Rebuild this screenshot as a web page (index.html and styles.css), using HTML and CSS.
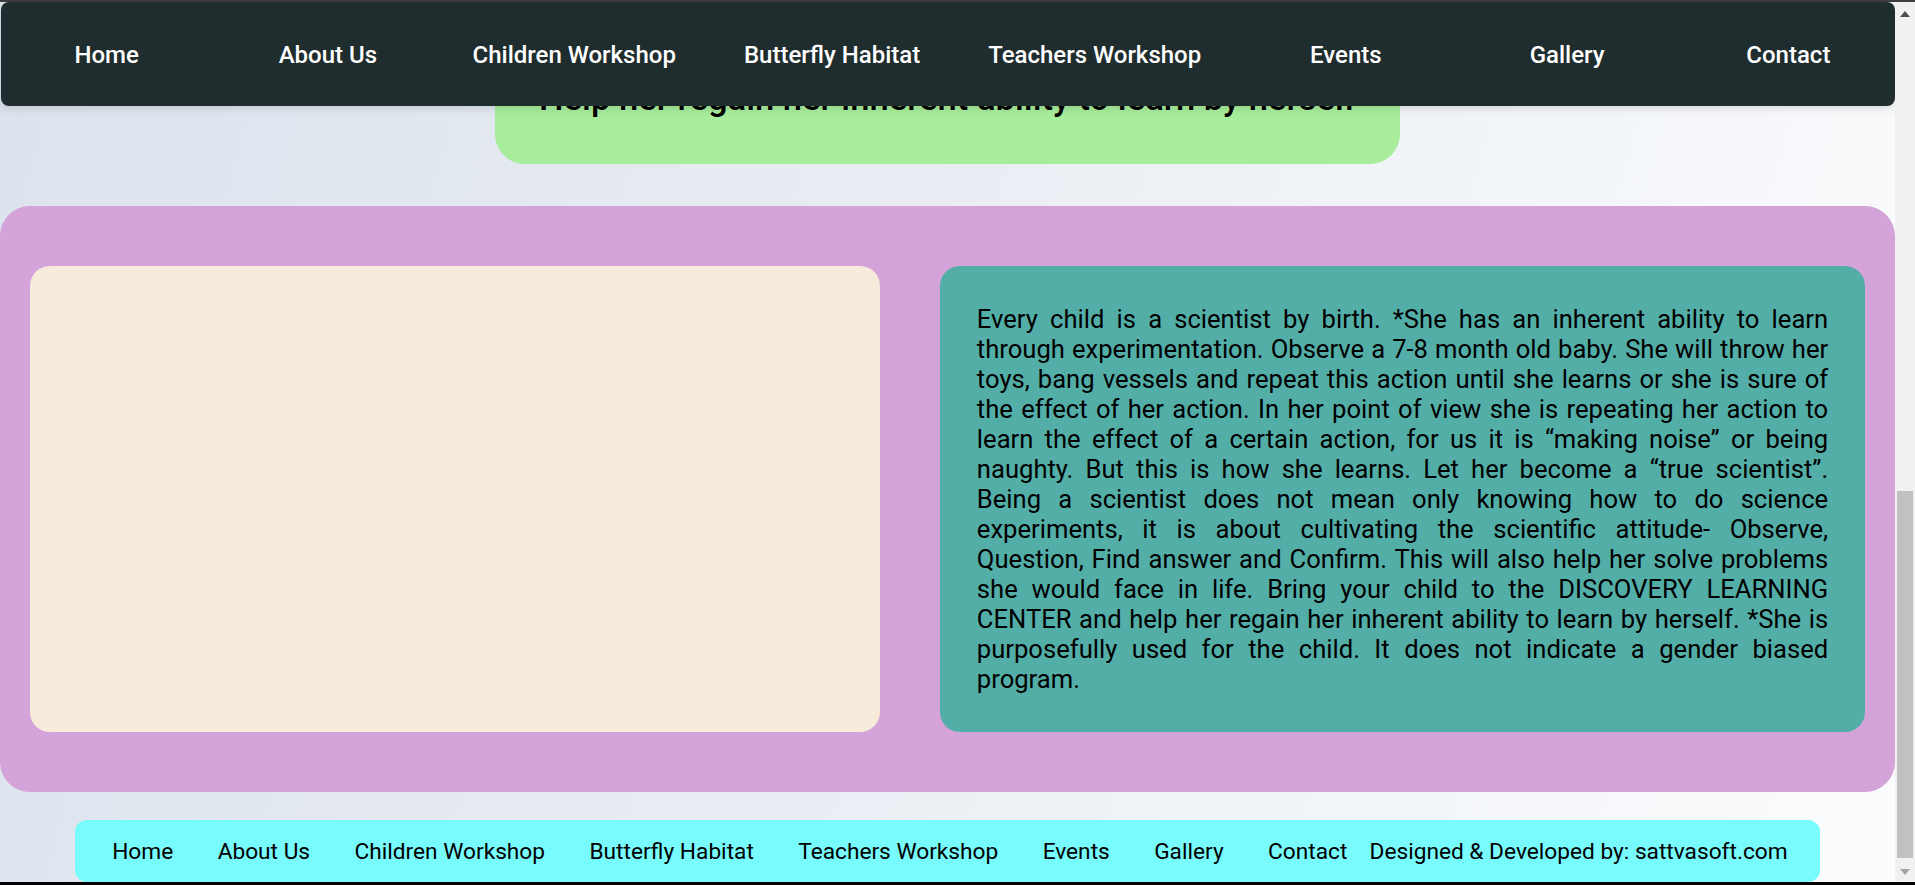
FILE: index.html
```html
<!DOCTYPE html>
<html lang="en">
<head>
<meta charset="utf-8">
<title>Discovery Learning Center</title>
<link rel="stylesheet" href="styles.css">
</head>
<body>
<div class="screen">
  <div class="chrome-top"></div>
  <div class="viewport">
    <div class="page">
      <nav class="topnav">
        <a href="#">Home</a>
        <a href="#">About Us</a>
        <a href="#">Children Workshop</a>
        <a href="#">Butterfly Habitat</a>
        <a href="#">Teachers Workshop</a>
        <a href="#">Events</a>
        <a href="#">Gallery</a>
        <a href="#">Contact</a>
      </nav>
      <main class="content">
        <div class="banner">
          <h2>Help her regain her inherent ability to learn by herself</h2>
        </div>
        <section class="about">
          <div class="media"></div>
          <div class="story">
            <p>Every child is a scientist by birth. *She has an inherent ability to learn through experimentation. Observe a 7-8 month old baby. She will throw her toys, bang vessels and repeat this action until she learns or she is sure of the effect of her action. In her point of view she is repeating her action to learn the effect of a certain action, for us it is “making noise” or being naughty. But this is how she learns. Let her become a “true scientist”. Being a scientist does not mean only knowing how to do science experiments, it is about cultivating the scientific attitude- Observe, Question, Find answer and Confirm. This will also help her solve problems she would face in life. Bring your child to the DISCOVERY LEARNING CENTER and help her regain her inherent ability to learn by herself. *She is purposefully used for the child. It does not indicate a gender biased program.</p>
          </div>
        </section>
        <footer class="footer">
          <a href="#">Home</a>
          <a href="#">About Us</a>
          <a href="#">Children Workshop</a>
          <a href="#">Butterfly Habitat</a>
          <a href="#">Teachers Workshop</a>
          <a href="#">Events</a>
          <a href="#">Gallery</a>
          <a href="#">Contact</a>
          <span class="credit">Designed &amp; Developed by: sattvasoft.com</span>
        </footer>
      </main>
    </div>
    <div class="scrollbar">
      <div class="sb-btn sb-up">
        <svg width="10" height="6" viewBox="0 0 10 6"><path d="M0 6 L5 0 L10 6 Z" fill="#505050"/></svg>
      </div>
      <div class="sb-track"><div class="sb-thumb"></div></div>
      <div class="sb-btn sb-down">
        <svg width="10" height="6" viewBox="0 0 10 6"><path d="M0 0 L10 0 L5 6 Z" fill="#a3a3a3"/></svg>
      </div>
    </div>
  </div>
  <div class="chrome-bottom"></div>
</div>
</body>
</html>
```
FILE: styles.css
```css
html, body {
  margin: 0;
  padding: 0;
}

body {
  font-family: Roboto, "Liberation Sans", sans-serif;
  color: #000;
}

.screen {
  width: 1915px;
  height: 885px;
  display: flex;
  flex-direction: column;
  overflow: hidden;
}

.chrome-top {
  height: 2px;
  background: #3d3d3d;
}

.chrome-bottom {
  height: 3px;
  background: #000;
}

.viewport {
  flex: 1;
  display: flex;
  min-height: 0;
}

.page {
  flex: 1;
  position: relative;
  overflow: hidden;
  background: linear-gradient(105deg, #dce3ed 0%, #e9edf3 45%, #fbfcfd 100%);
}

/* fixed header overlaying the scrolled content */
.topnav {
  position: absolute;
  top: 0;
  left: 1px;
  right: 0;
  height: 104px;
  background: #1f2d2f;
  border-radius: 8px;
  display: flex;
  align-items: center;
  padding-top: 1px;
  box-sizing: border-box;
  box-shadow: 0 3px 8px rgba(0, 0, 0, 0.12);
  z-index: 2;
}

.topnav a {
  flex: 1;
  padding: 0 34px;
  text-align: center;
  white-space: nowrap;
  color: #fff;
  font-size: 24px;
  font-weight: 500;
  text-decoration: none;
}

.topnav a:first-child {
  margin-left: -5px;
}

.topnav a:last-child {
  margin-right: -4px;
}

.content {
  display: flex;
  flex-direction: column;
  align-items: center;
  padding-top: 10px;
}

.banner {
  width: 905px;
  box-sizing: border-box;
  background: #a7ed9b;
  border-radius: 30px;
  padding: 66px 20px 45px;
  text-align: center;
}

.banner h2 {
  margin: 0;
  font-size: 34.6px;
  font-weight: 500;
  line-height: 41px;
  white-space: nowrap;
}

.about {
  align-self: stretch;
  margin-top: 42px;
  background: #d4a3da;
  border-radius: 30px;
  padding: 60px 30px;
  display: grid;
  grid-template-columns: 850px 1fr;
  gap: 60px;
}

.media {
  background: #f7ecdb;
  border-radius: 20px;
}

.story {
  background: #53aea8;
  border-radius: 20px;
  padding: 37.5px 36.85px 38.5px;
}

.story p {
  margin: 0;
  font-size: 25.6px;
  line-height: 30px;
  text-align: justify;
}

.footer {
  align-self: stretch;
  margin: 28px 75px 0;
  height: 62px;
  box-sizing: border-box;
  background: #77fbfc;
  border-radius: 12px;
  display: flex;
  align-items: center;
  padding-left: 15px;
  white-space: nowrap;
}

.footer a {
  padding: 0 22.2px;
  font-size: 22.7px;
  color: #000;
  text-decoration: none;
}

.credit {
  margin-left: 0;
  font-size: 22.7px;
}

.scrollbar {
  width: 20px;
  background: #f1f1f1;
  display: flex;
  flex-direction: column;
}

.sb-btn {
  height: 20px;
  display: flex;
  align-items: center;
  justify-content: center;
}

.sb-up {
  padding-top: 4px;
  box-sizing: border-box;
}

.sb-track {
  flex: 1;
  display: flex;
  flex-direction: column;
  justify-content: flex-end;
  padding: 0 2px 4px;
}

.sb-thumb {
  height: 367px;
  background: #c1c1c1;
}
```
